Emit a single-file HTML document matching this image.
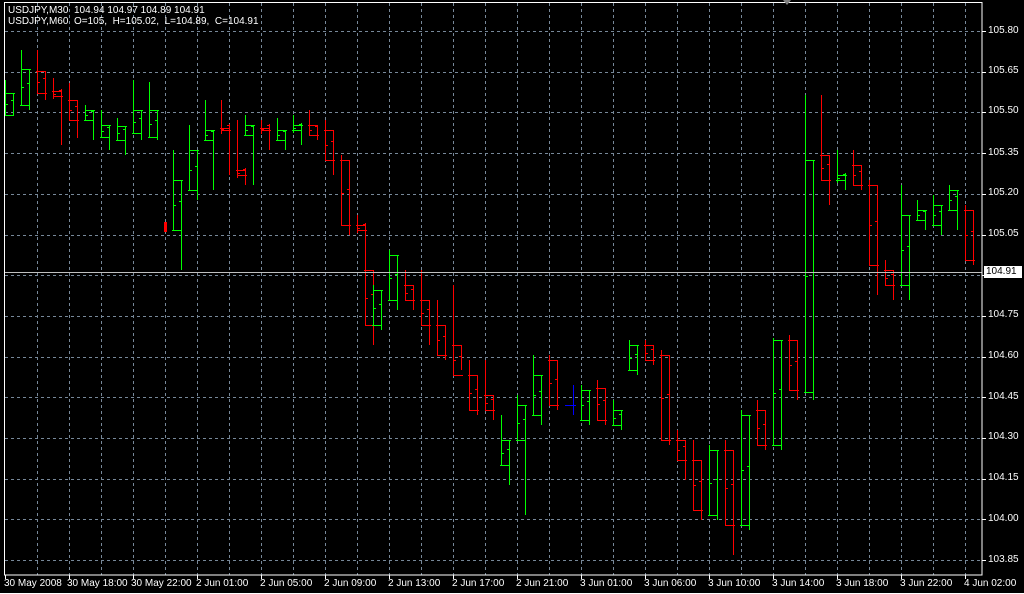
<!DOCTYPE html>
<html><head><meta charset="utf-8">
<style>
html,body{margin:0;padding:0;background:#000;width:1024px;height:594px;overflow:hidden}
body{position:relative;font-family:"Liberation Sans",sans-serif;font-size:10px;color:#fff}
.p{position:absolute;left:988px;line-height:10px}
.t{position:absolute;top:578px;line-height:12px;white-space:nowrap}
#hd{position:absolute;left:8px;top:5px;line-height:11px;font-size:10px;white-space:pre}
</style></head><body>
<svg id="c" width="1024" height="594" style="position:absolute;left:0;top:0"></svg>
<div id="hd">USDJPY,M30  104.94 104.97 104.89 104.91
USDJPY,M60  O=105,  H=105.02,  L=104.89,  C=104.91</div>
<div class="p" style="top:26px">105.80</div>
<div class="p" style="top:66px">105.65</div>
<div class="p" style="top:106px">105.50</div>
<div class="p" style="top:148px">105.35</div>
<div class="p" style="top:188px">105.20</div>
<div class="p" style="top:229px">105.05</div>
<div class="p" style="top:310px">104.75</div>
<div class="p" style="top:351px">104.60</div>
<div class="p" style="top:392px">104.45</div>
<div class="p" style="top:432px">104.30</div>
<div class="p" style="top:473px">104.15</div>
<div class="p" style="top:514px">104.00</div>
<div class="p" style="top:555px">103.85</div>
<div style="position:absolute;left:984px;top:266px;width:36px;height:12px;background:#fff;color:#000;line-height:12px;padding-left:2px">104.91</div>
<div class="t" style="left:4px">30 May 2008</div>
<div class="t" style="left:67px">30 May 18:00</div>
<div class="t" style="left:131px">30 May 22:00</div>
<div class="t" style="left:196px">2 Jun 01:00</div>
<div class="t" style="left:260px">2 Jun 05:00</div>
<div class="t" style="left:324px">2 Jun 09:00</div>
<div class="t" style="left:388px">2 Jun 13:00</div>
<div class="t" style="left:452px">2 Jun 17:00</div>
<div class="t" style="left:516px">2 Jun 21:00</div>
<div class="t" style="left:580px">3 Jun 01:00</div>
<div class="t" style="left:644px">3 Jun 06:00</div>
<div class="t" style="left:708px">3 Jun 10:00</div>
<div class="t" style="left:772px">3 Jun 14:00</div>
<div class="t" style="left:836px">3 Jun 18:00</div>
<div class="t" style="left:900px">3 Jun 22:00</div>
<div class="t" style="left:964px">4 Jun 02:00</div>
<script>
var s='';
var G='#778899';
for(var x=37;x<982;x+=32)s+='<line x1="'+(x+.5)+'" y1="3" x2="'+(x+.5)+'" y2="575" stroke="'+G+'" stroke-dasharray="3,3"/>';
for(var k=0;k<14;k++){var y=Math.round(31+40.7*k)+.5;s+='<line x1="5" y1="'+y+'" x2="982" y2="'+y+'" stroke="'+G+'" stroke-dasharray="3,3"/><line x1="982" y1="'+y+'" x2="986" y2="'+y+'" stroke="#fff"/>';}
for(var x=5;x<982;x+=64)s+='<line x1="'+(x+.5)+'" y1="575" x2="'+(x+.5)+'" y2="579" stroke="#fff"/>';
var d=[[5,115,93,80,116],[21,105,69,50,110],[37,71,93,50,100],[53,91,96,78,145],[69,100,120,83,138],[85,120,110,105,140],[101,137,125,110,150],[117,140,126,118,155],[133,133,110,80,140],[149,137,110,82,140],[173,230,180,150,270],[189,190,150,125,200],[205,140,130,100,190],[221,128,130,100,175],[237,170,175,120,185],[245,135,125,115,185],[261,128,130,120,150],[277,140,130,118,150],[293,130,125,115,145],[309,125,135,110,140],[325,130,160,120,175],[341,160,225,155,235],[357,225,230,215,250],[365,270,325,240,345],[373,325,290,285,330],[389,300,255,250,310],[405,285,300,270,310],[421,300,325,270,345],[437,325,355,300,360],[453,345,375,285,370],[469,375,410,360,415],[485,395,410,360,420],[501,465,440,415,485],[517,440,405,395,515],[533,415,375,355,425],[549,360,405,355,410],[581,420,390,385,425],[597,388,420,380,425],[613,425,410,400,430],[629,370,345,340,375],[645,345,360,340,365],[661,355,440,350,445],[677,440,460,430,480],[693,460,510,440,520],[709,515,450,445,520],[725,450,525,440,555],[741,525,415,410,530],[757,410,445,400,450],[773,445,340,338,450],[789,340,390,335,400],[805,392,160,95,400],[821,155,180,95,205],[837,180,175,150,190],[853,165,185,150,190],[869,185,265,180,295],[885,270,285,260,300],[901,285,215,185,300],[917,220,210,200,230],[933,225,205,195,235],[949,210,190,185,230],[965,210,260,205,265]];
d.forEach(function(b){var x=b[0],o=b[1],c=b[2],h=b[3],l=b[4];var col=c<o?'#00ff00':'#ff0000';var m=Math.round((o+c)/2);
s+='<g stroke="'+col+'" fill="none"><line x1="'+(x+.5)+'" y1="'+h+'" x2="'+(x+.5)+'" y2="'+Math.max(o,c,m+5)+'"/><line x1="'+(x+8.5)+'" y1="'+Math.min(o,c,m-5)+'" x2="'+(x+8.5)+'" y2="'+l+'"/><line x1="'+(x-1)+'" y1="'+(o+.5)+'" x2="'+(x+9)+'" y2="'+(o+.5)+'"/><line x1="'+x+'" y1="'+(c+.5)+'" x2="'+(x+10)+'" y2="'+(c+.5)+'"/><line x1="'+(x+1)+'" y1="'+(m+.5)+'" x2="'+(x+3)+'" y2="'+(m+.5)+'"/><line x1="'+(x+6)+'" y1="'+(m-3.5)+'" x2="'+(x+8)+'" y2="'+(m-3.5)+'"/></g>';});
s+='<rect x="164" y="222" width="3" height="10" fill="#f00"/><line x1="565" y1="405.5" x2="576" y2="405.5" stroke="#00f"/><line x1="573.5" y1="385" x2="573.5" y2="415" stroke="#00f"/>';
s+='<line x1="5" y1="272.5" x2="982" y2="272.5" stroke="#c0c0c0"/>';
s+='<rect x="4.5" y="2.5" width="977.5" height="572.5" stroke="#fff" fill="none"/><line x1="0" y1="593.5" x2="1024" y2="593.5" stroke="#fff"/><polygon points="783,0 791,0 787,5" fill="#808080"/>';
document.getElementById('c').innerHTML=s;
</script>
</body></html>
